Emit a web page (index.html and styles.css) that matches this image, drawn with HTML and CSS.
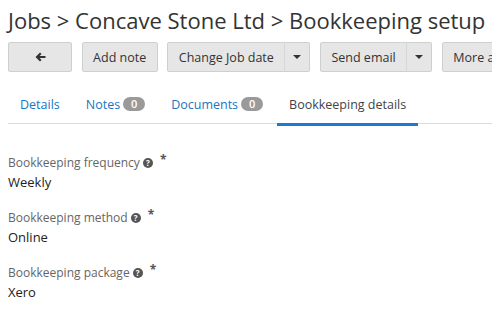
FILE: index.html
```html
<!DOCTYPE html>
<html>
<head>
<meta charset="utf-8">
<link rel="stylesheet" href="styles.css">
</head>
<body>
<div class="page">
  <h1 class="title">Jobs &gt; Concave Stone Ltd &gt; Bookkeeping setup</h1>
  <div class="toolbar">
    <button class="btn btn-back" aria-label="Back">
      <svg width="11" height="10" viewBox="0 0 11 10"><path d="M0.5 5 L5 0.6 L6.5 2.1 L4.6 4 H10.5 V6 H4.6 L6.5 7.9 L5 9.4 Z" fill="#333"/></svg>
    </button>
    <button class="btn">Add note</button>
    <div class="btn-group">
      <button class="btn btn-main">Change Job date</button><button class="btn btn-caret"><span class="caret"></span></button>
    </div>
    <div class="btn-group">
      <button class="btn btn-main">Send email</button><button class="btn btn-caret"><span class="caret"></span></button>
    </div>
    <button class="btn">More actions</button>
  </div>
  <ul class="tabs">
    <li class="tab"><a>Details</a></li>
    <li class="tab"><a>Notes <span class="badge">0</span></a></li>
    <li class="tab"><a>Documents <span class="badge">0</span></a></li>
    <li class="tab active"><a>Bookkeeping details</a></li>
  </ul>
  <div class="fields">
    <div class="field">
      <div class="label">Bookkeeping frequency <span class="help">?</span><span class="req">*</span></div>
      <div class="value">Weekly</div>
    </div>
    <div class="field">
      <div class="label">Bookkeeping method <span class="help">?</span><span class="req">*</span></div>
      <div class="value">Online</div>
    </div>
    <div class="field">
      <div class="label">Bookkeeping package <span class="help">?</span><span class="req">*</span></div>
      <div class="value">Xero</div>
    </div>
  </div>
</div>
</body>
</html>
```
FILE: styles.css
```css
html, body {
  margin: 0;
  padding: 0;
  background: #fff;
  overflow: hidden;
}
body {
  font-family: "Open Sans", "Noto Sans", sans-serif;
  color: #333;
  width: 492px;
  height: 310px;
}
.page {
  padding: 0 0 0 8px;
  width: 600px;
}
.title {
  margin: 0;
  padding-top: 5px;
  font-size: 22px;
  font-weight: 400;
  line-height: 30px;
  color: #333;
  white-space: nowrap;
}
.toolbar {
  display: flex;
  gap: 9.6px;
  margin-top: 7px;
  height: 30px;
}
.btn {
  font-family: inherit;
  font-size: 12.5px;
  color: #333;
  background: #e6e6e6;
  border: 1px solid #cfcfcf;
  border-radius: 2px;
  height: 30px;
  padding: 0 10.5px;
  margin: 0;
  display: flex;
  align-items: center;
  justify-content: center;
  white-space: nowrap;
}
.btn-back {
  width: 64px;
}
.btn-group {
  display: flex;
}
.btn-group .btn-main {
  border-top-right-radius: 0;
  border-bottom-right-radius: 0;
}
.btn-group .btn-caret {
  border-left-color: #d6d6d6;
  margin-left: -1px;
  border-top-left-radius: 0;
  border-bottom-left-radius: 0;
  width: 26px;
  padding: 0;
}
.caret {
  width: 0;
  height: 0;
  border-left: 4px solid transparent;
  border-right: 4px solid transparent;
  border-top: 4px solid #333;
}
.tabs {
  list-style: none;
  margin: 13px 0 0 0;
  padding: 0;
  display: flex;
  align-items: flex-start;
  gap: 2px;
  border-bottom: 1px solid #dcdcdc;
  height: 38px;
}
.tab a {
  display: flex;
  align-items: center;
  height: 38px;
  padding: 0 12px;
  font-size: 12.5px;
  color: #1a75c2;
  white-space: nowrap;
}
.tab.active a {
  color: #444;
  border-bottom: 3px solid #1a7ccc;
}
.badge {
  display: inline-block;
  background: #9a9a9a;
  color: #fff;
  font-size: 11px;
  font-weight: 600;
  line-height: 14px;
  height: 14px;
  min-width: 22px;
  text-align: center;
  border-radius: 8px;
  margin-left: 3px;
}
.fields {
  padding-top: 30px;
}
.field {
  height: 55px;
}
.label {
  font-size: 12px;
  color: #666;
  line-height: 18px;
  display: flex;
  align-items: center;
}
.help {
  display: inline-flex;
  align-items: center;
  justify-content: center;
  width: 10px;
  height: 10px;
  border-radius: 50%;
  background: #555;
  color: #fff;
  font-size: 8px;
  font-weight: 700;
  margin-left: 3px;
  line-height: 1;
}
.req {
  color: #555;
  margin-left: 7px;
  font-size: 12px;
  font-weight: 700;
  position: relative;
  top: -3px;
}
.value {
  font-size: 13px;
  color: #222;
  line-height: 20px;
}
```
